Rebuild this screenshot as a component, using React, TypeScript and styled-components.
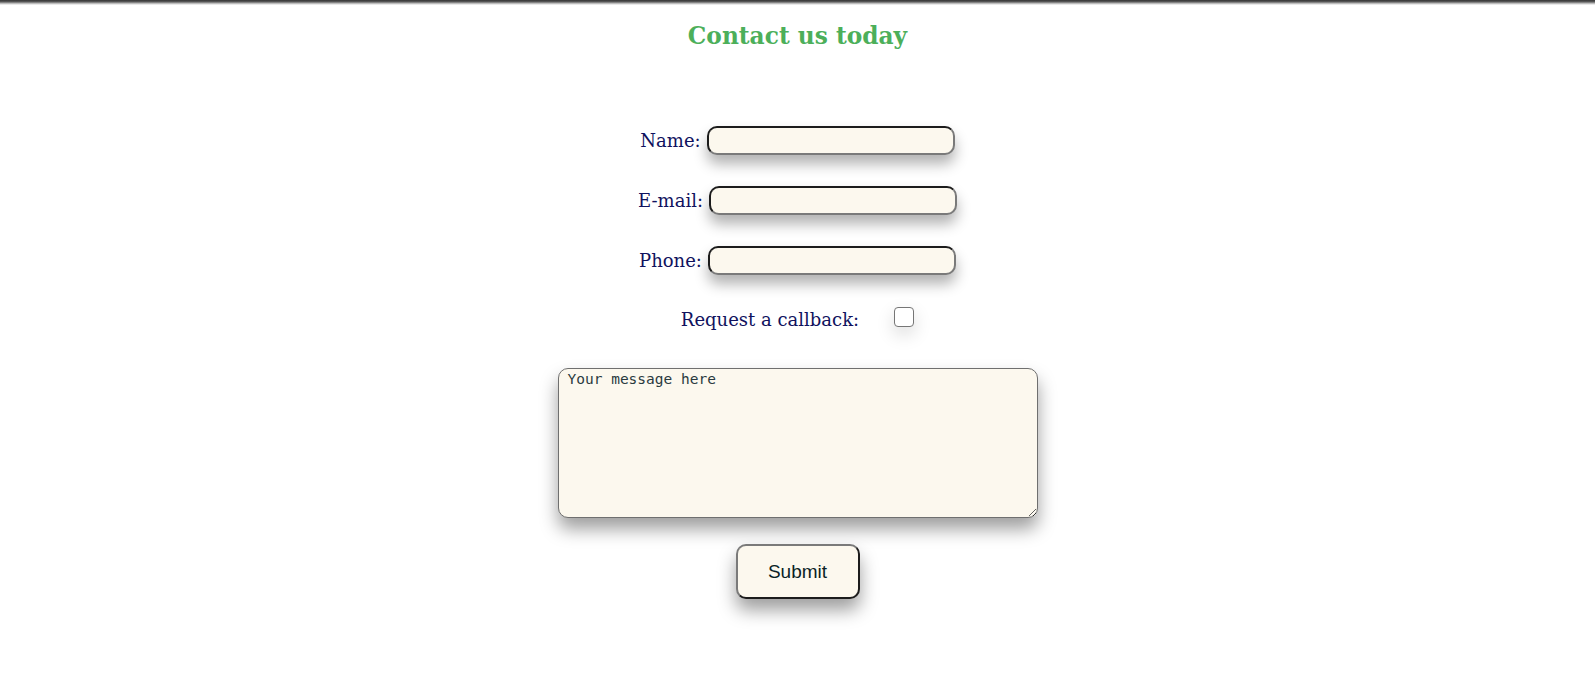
import React from "react";
import styled, { createGlobalStyle } from "styled-components";

const GlobalStyle = createGlobalStyle`
  html, body {
    margin: 0;
    padding: 0;
    background: #ffffff;
  }
  body {
    font-family: "DejaVu Serif", serif;
  }
`;

const Page = styled.div`
  display: flex;
  flex-direction: column;
  align-items: center;
  min-height: 679px;
`;

const TopBar = styled.div`
  align-self: stretch;
  height: 5px;
  background: linear-gradient(#333333 0%, #5a5a5a 35%, #bdbdbd 70%, #ffffff 100%);
`;

const Heading = styled.h2`
  margin: 17px 0 0 0;
  font-family: "DejaVu Serif", serif;
  font-weight: bold;
  font-size: 23.3px;
  line-height: 27px;
  color: #4caf5a;
`;

const Form = styled.form`
  display: flex;
  flex-direction: column;
  align-items: center;
  margin-top: 77px;
`;

const FieldRow = styled.div<{ $top?: number }>`
  display: flex;
  align-items: center;
  gap: 6px;
  margin-top: ${(p) => p.$top ?? 0}px;
`;

const Label = styled.label`
  font-family: "DejaVu Serif", serif;
  font-size: 18px;
  line-height: 21px;
  color: #10125e;
`;

const TextInput = styled.input`
  box-sizing: border-box;
  width: 248px;
  height: 29px;
  border-style: solid;
  border-width: 2px;
  border-color: #1c1c1c #7a7a7a #7a7a7a #1c1c1c;
  border-radius: 10px;
  background: #fcf8ee;
  box-shadow: 0 9px 14px rgba(0, 0, 0, 0.3);
  outline: none;
  padding: 0 8px;
  font-size: 15px;
`;

const CallbackRow = styled.div`
  display: flex;
  align-items: center;
  gap: 35px;
  margin-top: 34px;
`;

const Checkbox = styled.input`
  appearance: none;
  box-sizing: border-box;
  width: 20px;
  height: 20px;
  margin: -5px 0 0 0;
  border: 1px solid #767676;
  border-radius: 4px;
  background: #ffffff;
  box-shadow: 0 7px 18px rgba(0, 0, 0, 0.15);
`;

const Message = styled.textarea`
  box-sizing: border-box;
  width: 480px;
  height: 150px;
  margin-top: 38px;
  padding: 2px 9px;
  border: 1px solid #6f6f6f;
  border-radius: 10px;
  background: #fcf8ee;
  box-shadow: 0 11px 18px rgba(0, 0, 0, 0.38);
  font-family: "DejaVu Sans Mono", monospace;
  font-size: 14.5px;
  color: #263238;
  outline: none;
  &::placeholder {
    color: #2a3a40;
    opacity: 1;
  }
`;

const SubmitButton = styled.button`
  box-sizing: border-box;
  width: 124px;
  height: 55px;
  margin-top: 26px;
  border-style: solid;
  border-width: 2px;
  border-color: #7a7a7a #1c1c1c #1c1c1c #7a7a7a;
  border-radius: 10px;
  background: #fcf8ee;
  box-shadow: 0 11px 18px rgba(0, 0, 0, 0.38);
  font-family: "Liberation Sans", Arial, sans-serif;
  font-size: 19px;
  color: #0b1f26;
  cursor: pointer;
`;

const fields = [
  { id: "name", label: "Name:", type: "text" },
  { id: "email", label: "E-mail:", type: "email" },
  { id: "phone", label: "Phone:", type: "tel" },
];

export default function App() {
  return (
    <>
      <GlobalStyle />
      <Page>
        <TopBar />
        <Heading>Contact us today</Heading>
        <Form onSubmit={(e) => e.preventDefault()}>
          {fields.map((f, i) => (
            <FieldRow key={f.id} $top={i === 0 ? 0 : 31}>
              <Label htmlFor={f.id}>{f.label}</Label>
              <TextInput id={f.id} type={f.type} />
            </FieldRow>
          ))}
          <CallbackRow>
            <Label htmlFor="callback">Request a callback:</Label>
            <Checkbox id="callback" type="checkbox" />
          </CallbackRow>
          <Message placeholder="Your message here" />
          <SubmitButton type="submit">Submit</SubmitButton>
        </Form>
      </Page>
    </>
  );
}
